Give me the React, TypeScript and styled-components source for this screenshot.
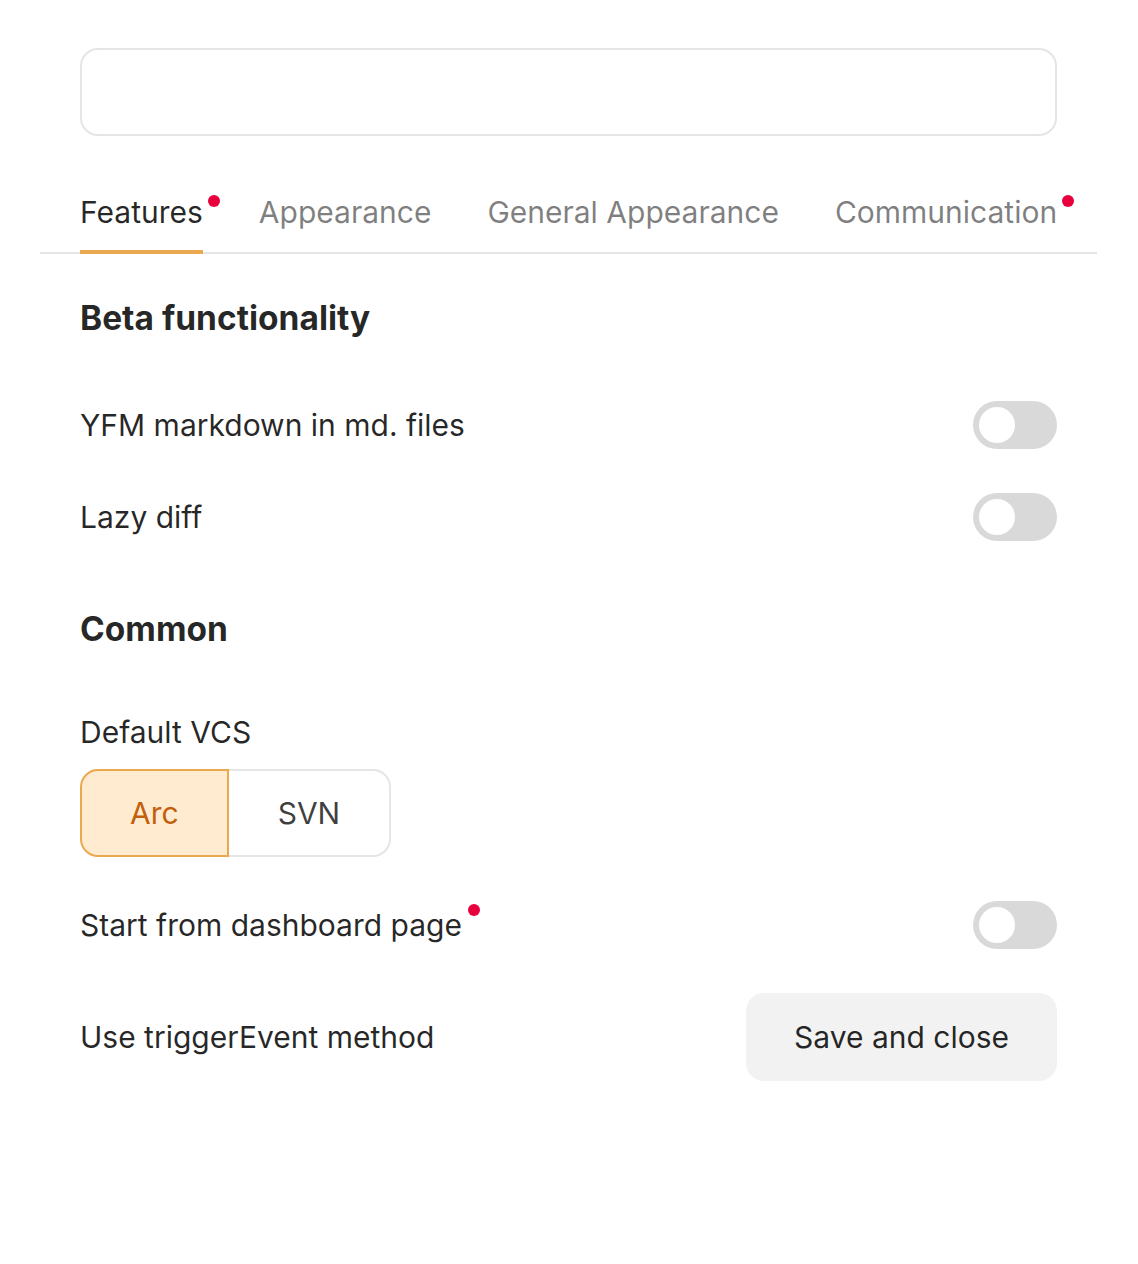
import React from "react";
import styled, { createGlobalStyle } from "styled-components";

const Global = createGlobalStyle`
  html, body { margin: 0; padding: 0; background: #fff; }
  body { font-family: Inter, "Noto Sans", sans-serif; color: rgba(0,0,0,0.85); -webkit-font-smoothing: antialiased; }
  * { box-sizing: border-box; }
`;

const Page = styled.div`
  width: 1138px;
  padding: 48px 81px 0 80px;
  display: flex;
  flex-direction: column;
`;

const SearchBox = styled.div`
  height: 88px;
  border: 2px solid #e5e5e5;
  border-radius: 18px;
  background: #fff;
`;

const TabList = styled.div`
  margin: 56px -40px 0 -40px;
  padding: 0 40px;
  display: flex;
  gap: 56px;
  border-bottom: 2px solid #e5e5e5;
`;

const Tab = styled.div<{ $active?: boolean }>`
  position: relative;
  font-size: 30px;
  line-height: 40px;
  padding-bottom: 18px;
  margin-bottom: -2px;
  border-bottom: 4px solid ${(p) => (p.$active ? "#eaa94f" : "transparent")};
  color: ${(p) => (p.$active ? "rgba(0,0,0,0.85)" : "rgba(0,0,0,0.5)")};
  white-space: nowrap;
`;

const Dot = styled.span`
  position: absolute;
  width: 12px;
  height: 12px;
  border-radius: 50%;
  background: #e8003d;
  top: 3px;
  right: -17px;
`;

const Content = styled.div`
  display: flex;
  flex-direction: column;
  gap: 44px;
  padding-top: 44px;
`;

const SectionTitle = styled.div<{ $spaced?: boolean }>`
  font-size: 33.5px;
  line-height: 40px;
  font-weight: 700;
  color: rgba(0,0,0,0.85);
  margin-bottom: 19px;
  margin-top: ${(p) => (p.$spaced ? "24px" : "0")};
`;

const Row = styled.div`
  display: flex;
  align-items: center;
  justify-content: space-between;
  min-height: 48px;
`;

const Label = styled.span`
  position: relative;
  font-size: 30px;
  line-height: 40px;
`;

const LabelDot = styled(Dot)`
  top: -1px;
  right: -18px;
`;

const Track = styled.div`
  width: 84px;
  height: 48px;
  border-radius: 24px;
  background: #d9d9d9;
  padding: 6px;
  display: flex;
`;

const Knob = styled.div`
  width: 36px;
  height: 36px;
  border-radius: 50%;
  background: #fff;
`;

const Field = styled.div`
  display: flex;
  flex-direction: column;
  gap: 17px;
`;

const Segmented = styled.div`
  display: flex;
  align-self: flex-start;
`;

const Segment = styled.div<{ $active?: boolean; $first?: boolean }>`
  height: 88px;
  padding: 0 ${(p) => (p.$first ? "48px" : "49px")};
  display: flex;
  align-items: center;
  font-size: 30px;
  border: 2px solid ${(p) => (p.$active ? "#eaa94f" : "#e5e5e5")};
  border-left-width: ${(p) => (p.$first ? "2px" : "0")};
  border-radius: ${(p) => (p.$first ? "18px 0 0 18px" : "0 18px 18px 0")};
  background: ${(p) => (p.$active ? "#feebd0" : "#fff")};
  color: ${(p) => (p.$active ? "#c35f0c" : "rgba(0,0,0,0.75)")};
`;

const Button = styled.button`
  height: 88px;
  padding: 0 48px;
  border: none;
  border-radius: 18px;
  background: #f2f2f2;
  font-family: Inter, "Noto Sans", sans-serif;
  font-size: 30px;
  color: rgba(0,0,0,0.85);
`;

const Toggle = () => (
  <Track>
    <Knob />
  </Track>
);

export default function App() {
  return (
    <Page>
      <Global />
      <SearchBox />
      <TabList>
        <Tab $active>
          Features
          <Dot />
        </Tab>
        <Tab>Appearance</Tab>
        <Tab>General Appearance</Tab>
        <Tab>
          Communication
          <Dot />
        </Tab>
      </TabList>
      <Content>
        <SectionTitle>Beta functionality</SectionTitle>
        <Row>
          <Label>YFM markdown in md. files</Label>
          <Toggle />
        </Row>
        <Row>
          <Label>Lazy diff</Label>
          <Toggle />
        </Row>
        <SectionTitle $spaced>Common</SectionTitle>
        <Field>
          <Label>Default VCS</Label>
          <Segmented>
            <Segment $first $active>Arc</Segment>
            <Segment>SVN</Segment>
          </Segmented>
        </Field>
        <Row>
          <Label>
            Start from dashboard page
            <LabelDot />
          </Label>
          <Toggle />
        </Row>
        <Row>
          <Label>Use triggerEvent method</Label>
          <Button>Save and close</Button>
        </Row>
      </Content>
    </Page>
  );
}
